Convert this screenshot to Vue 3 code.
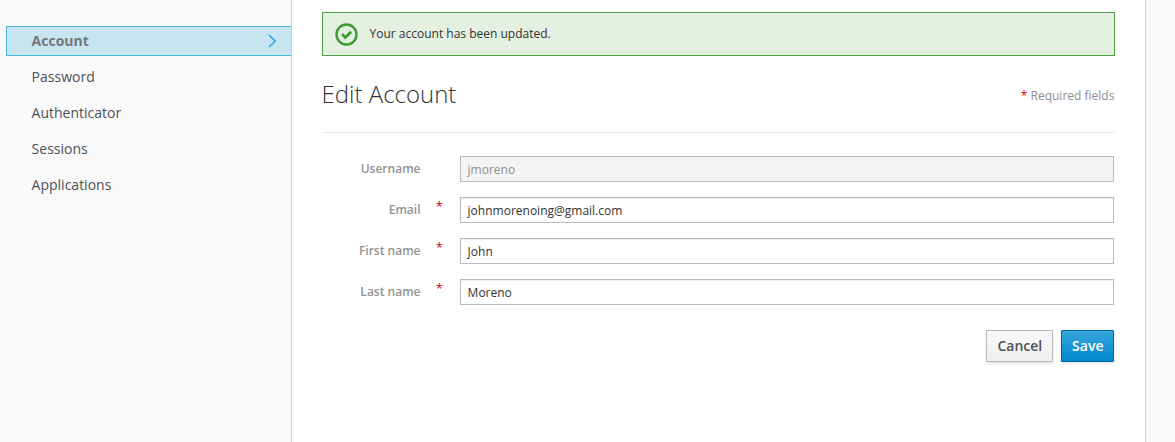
<script setup>
import { ref } from 'vue'

const navItems = ['Account', 'Password', 'Authenticator', 'Sessions', 'Applications']
const active = ref('Account')

const fields = ref([
  { id: 'username', label: 'Username', value: 'jmoreno', required: false, disabled: true },
  { id: 'email', label: 'Email', value: 'johnmorenoing@gmail.com', required: true, disabled: false },
  { id: 'firstName', label: 'First name', value: 'John', required: true, disabled: false },
  { id: 'lastName', label: 'Last name', value: 'Moreno', required: true, disabled: false },
])
</script>

<template>
  <div class="page">
    <nav class="sidebar">
      <a
        v-for="item in navItems"
        :key="item"
        class="nav-item"
        :class="{ active: item === active }"
        @click="active = item"
      >
        <span>{{ item }}</span>
        <svg v-if="item === active" class="chevron" width="9" height="14" viewBox="0 0 9 14">
          <path d="M1 1 L7.2 7 L1 13" fill="none" stroke="#1ba1dc" stroke-width="1.3" />
        </svg>
      </a>
    </nav>

    <main class="content">
      <div class="alert">
        <svg class="alert-icon" width="24" height="24" viewBox="0 0 24 24">
          <circle cx="11.5" cy="12.5" r="10" fill="none" stroke="#3f9c35" stroke-width="2.4" />
          <path d="M7.1 12.2 L10.4 15.5 L16.1 9.8" fill="none" stroke="#3f9c35" stroke-width="2.8" />
        </svg>
        <span>Your account has been updated.</span>
      </div>

      <header class="heading">
        <h2>Edit Account</h2>
        <span class="hint"><span class="star">*</span> Required fields</span>
      </header>

      <form class="form" @submit.prevent>
        <div v-for="field in fields" :key="field.id" class="row">
          <label :for="field.id">{{ field.label }}</label>
          <span class="star mark">{{ field.required ? '*' : '' }}</span>
          <input :id="field.id" v-model="field.value" type="text" :disabled="field.disabled" />
        </div>
        <div class="actions">
          <button class="btn cancel" type="button">Cancel</button>
          <button class="btn save" type="submit">Save</button>
        </div>
      </form>
    </main>
  </div>
</template>

<style>
body {
  background: #f9f9f9;
}
</style>

<style scoped>
.page {
  display: flex;
  box-sizing: border-box;
  width: 1175px;
  height: 442px;
  overflow: hidden;
  background: #f9f9f9;
  font-family: "Open Sans", "Noto Sans", sans-serif;
  font-size: 12px;
  color: #333;
}
.page * {
  box-sizing: border-box;
}
.sidebar {
  display: flex;
  flex-direction: column;
  gap: 6px;
  width: 291px;
  padding: 26px 0 0 6px;
}
.nav-item {
  display: flex;
  align-items: center;
  justify-content: space-between;
  height: 30px;
  padding: 0 14px 0 24.6px;
  border: 1px solid transparent;
  border-right: 0;
  font-size: 14px;
  line-height: 28px;
  color: #4d5258;
  cursor: pointer;
}
.nav-item.active {
  background: #c7e5f0;
  border-color: #4bb5de;
  color: #75777a;
  font-weight: 700;
}
.content {
  width: 855px;
  padding: 12px 30px 0;
  background: #fff;
  border: solid #cfcfcf;
  border-width: 0 1px;
}
.alert {
  display: flex;
  align-items: center;
  gap: 10.5px;
  height: 44px;
  padding-left: 12px;
  border: 1px solid #4ba143;
  background: #e4f0e0;
  line-height: 20px;
}
.heading {
  display: flex;
  align-items: center;
  justify-content: space-between;
  height: 77px;
  padding-right: 0.6px;
  border-bottom: 1px solid #e6e6e6;
}
.heading h2 {
  margin: 0 0 0 -0.5px;
  font-size: 24px;
  font-weight: 300;
  line-height: 26px;
}
.hint {
  padding-top: 3px;
  color: #8b8d8f;
}
.star {
  color: #c00;
}
.form {
  display: flex;
  flex-direction: column;
  gap: 15px;
  padding: 23px 1px 0 0;
}
.row {
  display: grid;
  grid-template-columns: 98.5px 39.5px 1fr;
  height: 26px;
}
.row label {
  text-align: right;
  font-weight: 600;
  line-height: 26px;
  color: #909294;
}
.mark {
  padding-left: 15.5px;
  line-height: 20px;
}
.row input {
  width: 100%;
  height: 26px;
  margin: 0;
  padding: 1px 3px;
  border: 1px solid #bababa;
  border-radius: 0;
  background: #fff;
  box-shadow: inset 0 1px 1px rgba(0, 0, 0, 0.075);
  font: inherit;
  text-indent: 3.6px;
  color: #333;
  outline: 0;
}
.row input:disabled {
  background: #f4f4f4;
  box-shadow: none;
  color: #8f9194;
}
.actions {
  display: flex;
  justify-content: flex-end;
  gap: 8px;
  padding-top: 10px;
}
.btn {
  height: 32px;
  margin: 0;
  padding: 0 0 0 0.6px;
  border: 1px solid #b7b7b7;
  border-radius: 1px;
  box-shadow: 0 2px 3px rgba(0, 0, 0, 0.1);
  font-family: inherit;
  font-size: 14px;
  font-weight: 600;
  line-height: 30px;
}
.cancel {
  width: 67px;
  background: linear-gradient(#fafafa, #ededed);
  color: #4d5258;
}
.save {
  width: 53px;
  border-color: #00659c;
  background: linear-gradient(#39a5dc, #0088ce);
  color: #fff;
}
</style>
